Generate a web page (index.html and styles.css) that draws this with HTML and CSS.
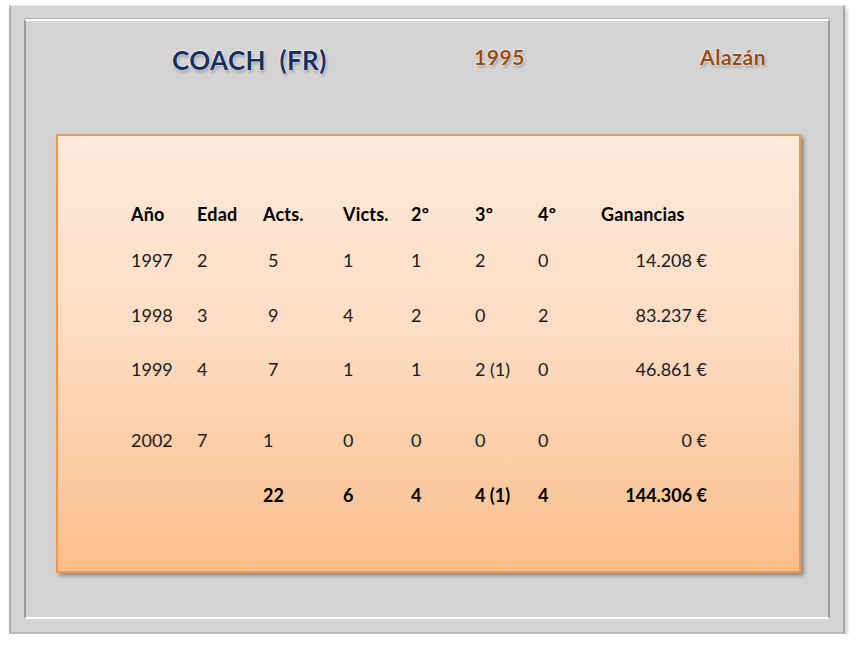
FILE: index.html
```html
<!DOCTYPE html>
<html lang="es">
<head>
<meta charset="utf-8">
<title>COACH (FR)</title>
<link rel="stylesheet" href="styles.css">
</head>
<body>
<div class="outer">
  <div class="inner">
    <div class="titlebar">
      <div class="name">COACH  (FR)</div>
      <div class="meta">1995</div>
      <div class="meta">Alazán</div>
    </div>
    <div class="panel">
      <div class="row head">
        <span>Año</span><span>Edad</span><span>Acts.</span><span>Victs.</span><span>2º</span><span>3º</span><span>4º</span><span>Ganancias</span>
      </div>
      <div class="row r1">
        <span>1997</span><span>2</span><span class="ind">5</span><span>1</span><span>1</span><span>2</span><span>0</span><span class="money">14.208 €</span>
      </div>
      <div class="row r2">
        <span>1998</span><span>3</span><span class="ind">9</span><span>4</span><span>2</span><span>0</span><span>2</span><span class="money">83.237 €</span>
      </div>
      <div class="row r3">
        <span>1999</span><span>4</span><span class="ind">7</span><span>1</span><span>1</span><span>2 (1)</span><span>0</span><span class="money">46.861 €</span>
      </div>
      <div class="row r4">
        <span>2002</span><span>7</span><span>1</span><span>0</span><span>0</span><span>0</span><span>0</span><span class="money">0 €</span>
      </div>
      <div class="row total">
        <span></span><span></span><span>22</span><span>6</span><span>4</span><span>4 (1)</span><span>4</span><span class="money">144.306 €</span>
      </div>
    </div>
  </div>
</div>
</body>
</html>
```

FILE: styles.css
```css
html, body {
  margin: 0;
  padding: 0;
  background: #ffffff;
}

body {
  font-family: Lato, "Open Sans", sans-serif;
  padding: 5px 0 0 9px;
}

.outer {
  box-sizing: border-box;
  width: 836px;
  height: 629px;
  background: #d4d4d4;
  border-top: 1px solid #ececec;
  border-left: 2px solid #b4b4b4;
  border-right: 2px solid #a8a8a8;
  border-bottom: 2px solid #b8b8b8;
  box-shadow: 2px 3px 4px rgba(0, 0, 0, 0.22);
  padding: 13px 0 0 13px;
}

.inner {
  box-sizing: border-box;
  width: 806px;
  height: 600px;
  background: #d4d4d4;
  border-top: 2px solid #ffffff;
  border-bottom: 2px solid #ffffff;
  border-left: 2px solid #9c9c9c;
  border-right: 2px solid #9c9c9c;
  box-shadow: 0 -1px 0 #b0b0b0;
  padding: 0 0 0 30px;
}

.titlebar {
  display: grid;
  grid-template-columns: 302px 226px auto;
  align-items: center;
  height: 78px;
  padding-left: 116px;
}

.name {
  white-space: pre;
  font-weight: 700;
  font-size: 26px;
  color: #17305e;
  letter-spacing: 0.4px;
  margin-top: 0;
  text-shadow: 0 0 2px #fff, 0 0 2px #fff, 0 0 1px #fff, 1px 2px 3px rgba(0, 0, 0, 0.35);
}

.meta {
  font-weight: 700;
  font-size: 21px;
  color: #974a10;
  letter-spacing: 0.6px;
  margin-top: -7px;
  text-shadow: 0 0 2px #fff, 0 0 2px #fff, 0 0 1px #fff, 1px 2px 3px rgba(0, 0, 0, 0.35);
}

.panel {
  box-sizing: border-box;
  margin-top: 35px;
  width: 745px;
  height: 439px;
  border: 2px solid #f79646;
  background: linear-gradient(to bottom, #fdeadb 0%, #fddcc3 45%, #fbbf8b 100%);
  box-shadow: 3px 3px 4px rgba(0, 0, 0, 0.35);
  padding: 67px 0 0 73px;
}

.row {
  display: grid;
  grid-template-columns: 66px 66px 80px 68px 64px 63px 63px 106px;
  height: 22px;
  line-height: 22px;
  font-size: 18px;
  color: #1a1a1a;
}

.head, .total {
  font-weight: 700;
  color: #000;
}

.head { letter-spacing: 0.2px; }

.r1 { margin-top: 24px; }
.r2 { margin-top: 33px; }
.r3 { margin-top: 32px; }
.r4 { margin-top: 49px; }
.total { margin-top: 33px; }

.ind { padding-left: 5px; }

.money { text-align: right; }
```
